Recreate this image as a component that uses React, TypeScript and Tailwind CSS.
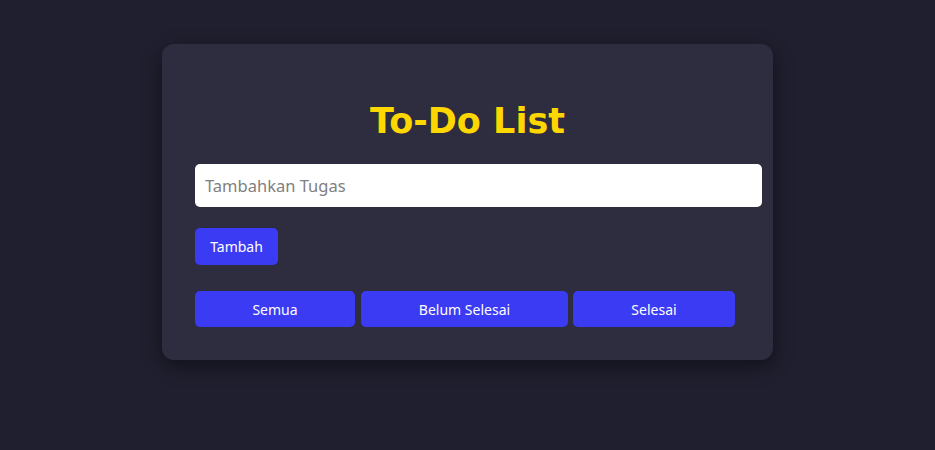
export default function App() {
  const filters = [
    { label: "Semua", cls: "w-[160px]" },
    { label: "Belum Selesai", cls: "w-[207px] ml-[6px]" },
    { label: "Selesai", cls: "w-[162px] ml-[5px]" },
  ];

  return (
    <div className="min-h-[450px] bg-[#1f1f2f] pt-[44px] font-['Noto_Sans',sans-serif]">
      <div className="mx-auto w-[611px] rounded-xl bg-[#2e2d40] px-[33px] pt-[32px] pb-[33px] shadow-[0_6px_20px_rgba(0,0,0,0.45)]">
        <h1 className="mt-[25px] mb-[23px] h-[40px] text-center font-['DejaVu_Sans',sans-serif] text-[35px] leading-[40px] font-bold text-[#ffd700]">
          To-Do List
        </h1>

        <input
          type="text"
          placeholder="Tambahkan Tugas"
          className="block h-[43px] w-[567px] rounded-[5px] bg-white px-[10px] text-[16.5px] text-gray-800 outline-none placeholder:text-[#808080]"
        />

        <button className="mt-[21px] h-[37px] w-[83px] rounded-[5px] bg-[#3b3bf3] text-[14px] text-white">
          Tambah
        </button>

        <div className="mt-[26px] flex">
          {filters.map((f) => (
            <button
              key={f.label}
              className={`${f.cls} h-[36px] rounded-[5px] bg-[#3b3bf3] text-[14px] text-white`}
            >
              {f.label}
            </button>
          ))}
        </div>
      </div>
    </div>
  );
}
